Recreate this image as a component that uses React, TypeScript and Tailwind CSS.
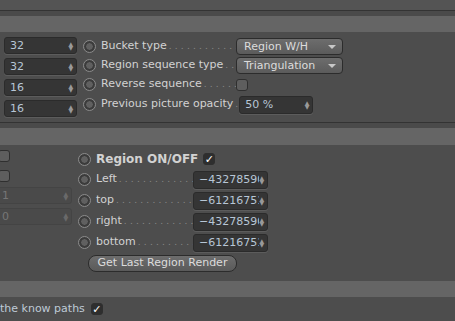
import React from 'react';

const font = { fontFamily: '"DejaVu Sans", "Liberation Sans", sans-serif' };

const Spin = ({ dim = false }: { dim?: boolean }) => (
    <span className={`flex flex-col items-center leading-none text-[6px] shrink-0 ${dim ? 'text-[#6a6a6a]' : 'text-[#9a9a9a]'}`}>
        <span className="h-[4px] leading-[4px]">▲</span>
        <span className="h-[4px] leading-[4px]">▼</span>
    </span>
);

const NumField = ({ value, className = '', dim = false }: { value: string; className?: string; dim?: boolean }) => (
    <div
        className={`flex items-center rounded-[3px] border h-[17px] pl-[5px] pr-[3px] ${
            dim ? 'bg-[#4a4a4a] border-[#444] text-[#767676]' : 'bg-[#353535] border-[#2b2b2b] text-[#b7c6d6] shadow-[0_1px_0_#5c5c5c]'
        } ${className}`}
    >
        <span className="flex-1 min-w-0 overflow-hidden whitespace-nowrap text-[11px] leading-none">{value}</span>
        <Spin dim={dim} />
    </div>
);

const Radio = () => (
    <span className="w-[13px] h-[13px] rounded-full border border-[#8c8c8c] bg-[#3e3e3e] flex items-center justify-center shrink-0">
        <span className="w-[9px] h-[9px] rounded-full bg-[#606060] border border-[#353535]" />
    </span>
);

const Check = ({ on = false, className = '' }: { on?: boolean; className?: string }) => (
    <span
        className={`w-[12px] h-[12px] rounded-[3px] border border-[#2f2f2f] flex items-center justify-center text-[11px] leading-none text-white shrink-0 ${
            on ? 'bg-[#2e2e2e]' : 'bg-[#5e5e5e]'
        } ${className}`}
    >
        {on ? '✓' : ''}
    </span>
);

const Dots = () => (
    <span className="flex-1 min-w-0 overflow-hidden whitespace-nowrap text-[#8a8a8a] text-[9px] tracking-[3.2px] pl-[2px] pr-[3px]">
        ....................................................
    </span>
);

const Dropdown = ({ label }: { label: string }) => (
    <div className="flex items-center w-[107px] h-[17px] rounded-[4px] border border-[#2c2c2c] bg-gradient-to-b from-[#6d6d6d] to-[#5b5b5b] pl-[7px] pr-[6px] text-[#dcdcdc]">
        <span className="flex-1 text-[11px] leading-none">{label}</span>
        <span className="w-0 h-0 border-l-[4px] border-r-[4px] border-t-[4px] border-l-transparent border-r-transparent border-t-[#c8c8c8]" />
    </div>
);

const Band = () => <div className="h-[16px] bg-[#656565]" />;

export default function App() {
    return (
        <div className="w-[455px] h-[321px] overflow-hidden bg-[#4d4d4d] text-[#d2d2d2]" style={font}>
            <div className="h-[10px] bg-[#545454]" />
            <div className="h-px bg-[#333]" />
            <div className="h-[5px] bg-[#4a4a4a]" />
            <Band />

            {/* Bucket section */}
            <div className="h-[90px] flex pt-[5px]">
                <div className="w-[73px] ml-[4px] flex flex-col gap-[4px]">
                    <NumField value="32" />
                    <NumField value="32" />
                    <NumField value="16" />
                    <NumField value="16" />
                </div>
                <div className="ml-[6px] flex flex-col">
                    {[
                        { label: 'Bucket type', ctl: <Dropdown label="Region W/H" /> },
                        { label: 'Region sequence type', ctl: <Dropdown label="Triangulation" /> },
                        { label: 'Reverse sequence', ctl: <Check /> },
                        {
                            label: 'Previous picture opacity',
                            ctl: <NumField value="50 %" className="w-[74px] h-[18px] ml-px" />,
                        },
                    ].map((r, i) => (
                        <div key={i} className={`flex items-center w-[262px] ${i === 3 ? 'h-[21px]' : 'h-[19px]'}`}>
                            <Radio />
                            <span className="ml-[5px] text-[11px] whitespace-nowrap">{r.label}</span>
                            <Dots />
                            <span className="w-[109px] flex">{r.ctl}</span>
                        </div>
                    ))}
                </div>
            </div>

            <div className="h-px bg-[#333]" />
            <div className="h-[5px] bg-[#4a4a4a]" />
            <div className="h-[17px] bg-[#656565]" />

            {/* Region section */}
            <div className="h-[136px] flex pt-[5px]">
                <div className="w-[72px] flex flex-col">
                    <Check className="-ml-[2px]" />
                    <Check className="-ml-[2px] mt-[8px]" />
                    <NumField value="1" dim className="mt-[5px] -ml-[4px]" />
                    <NumField value="0" dim className="mt-[4px] -ml-[4px]" />
                </div>
                <div className="ml-[6px] flex flex-col">
                    <div className="flex items-center h-[18px]">
                        <Radio />
                        <span className="ml-[5px] text-[12px] font-bold">Region ON/OFF</span>
                        <Check on className="ml-[5px]" />
                    </div>
                    {[
                        ['Left', '−43278590'],
                        ['top', '−61216751'],
                        ['right', '−43278590'],
                        ['bottom', '−61216751'],
                    ].map(([l, v], i) => (
                        <div key={l} className={`flex items-center h-[21px] w-[190px] ${i === 0 ? 'mt-px' : ''}`}>
                            <Radio />
                            <span className="ml-[5px] text-[11px]">{l}</span>
                            <Dots />
                            <NumField value={v} className="w-[75px] h-[18px]" />
                        </div>
                    ))}
                    <div className="mt-[2px] ml-[10px] w-[149px] h-[17px] rounded-[8px] border border-[#2c2c2c] bg-gradient-to-b from-[#6d6d6d] to-[#5a5a5a] flex items-center justify-center text-[11px] text-[#dcdcdc]">
                        Get Last Region Render
                    </div>
                </div>
            </div>

            <Band />
            <div className="flex items-center h-[24px] text-[11px] text-[#bfcad6]">
                <span className="whitespace-nowrap">the know paths</span>
                <Check on className="ml-[6px]" />
            </div>
        </div>
    );
}
